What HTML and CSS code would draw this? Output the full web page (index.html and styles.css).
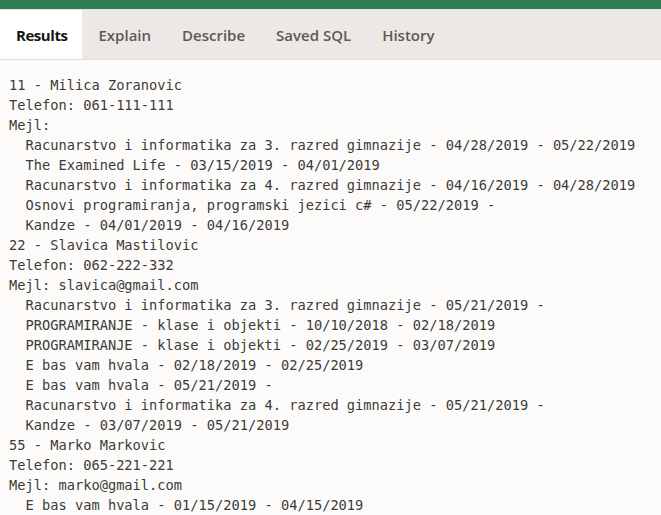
FILE: index.html
```html
<!DOCTYPE html>
<html>
<head>
<meta charset="utf-8">
<link rel="stylesheet" href="styles.css">
</head>
<body>
<div class="topbar"></div>
<nav class="tabs">
  <div class="tab active">Results</div>
  <div class="tab">Explain</div>
  <div class="tab">Describe</div>
  <div class="tab">Saved SQL</div>
  <div class="tab">History</div>
</nav>
<pre class="output">11 - Milica Zoranovic
Telefon: 061-111-111
Mejl: 
  Racunarstvo i informatika za 3. razred gimnazije - 04/28/2019 - 05/22/2019
  The Examined Life - 03/15/2019 - 04/01/2019
  Racunarstvo i informatika za 4. razred gimnazije - 04/16/2019 - 04/28/2019
  Osnovi programiranja, programski jezici c# - 05/22/2019 - 
  Kandze - 04/01/2019 - 04/16/2019
22 - Slavica Mastilovic
Telefon: 062-222-332
Mejl: slavica@gmail.com
  Racunarstvo i informatika za 3. razred gimnazije - 05/21/2019 - 
  PROGRAMIRANJE - klase i objekti - 10/10/2018 - 02/18/2019
  PROGRAMIRANJE - klase i objekti - 02/25/2019 - 03/07/2019
  E bas vam hvala - 02/18/2019 - 02/25/2019
  E bas vam hvala - 05/21/2019 - 
  Racunarstvo i informatika za 4. razred gimnazije - 05/21/2019 - 
  Kandze - 03/07/2019 - 05/21/2019
55 - Marko Markovic
Telefon: 065-221-221
Mejl: marko@gmail.com
  E bas vam hvala - 01/15/2019 - 04/15/2019
</pre>
</body>
</html>
```
FILE: styles.css
```css
html, body {
  margin: 0;
  padding: 0;
  background: #fcfbfa;
  overflow: hidden;
}
.topbar {
  height: 9px;
  background: #317d52;
  border-bottom: 1px solid #e6e2de;
}
.tabs {
  display: flex;
  height: 49px;
  background: #ece8e5;
  border-bottom: 1px solid #e2ded9;
  font-family: "Open Sans", "Noto Sans", sans-serif;
  font-weight: 600;
  font-size: 15px;
}
.tab {
  display: flex;
  align-items: center;
  padding: 0 15px 0 16px;
  color: #5f5955;
}
.tab.active {
  background: #ffffff;
  color: #161513;
  font-weight: 700;
  letter-spacing: -0.45px;
}
.output {
  margin: 0;
  padding: 15px 9px 0 9px;
  font-family: "DejaVu Sans Mono", monospace;
  font-size: 13.7px;
  line-height: 20px;
  color: #3d3b38;
  white-space: pre;
}
```
